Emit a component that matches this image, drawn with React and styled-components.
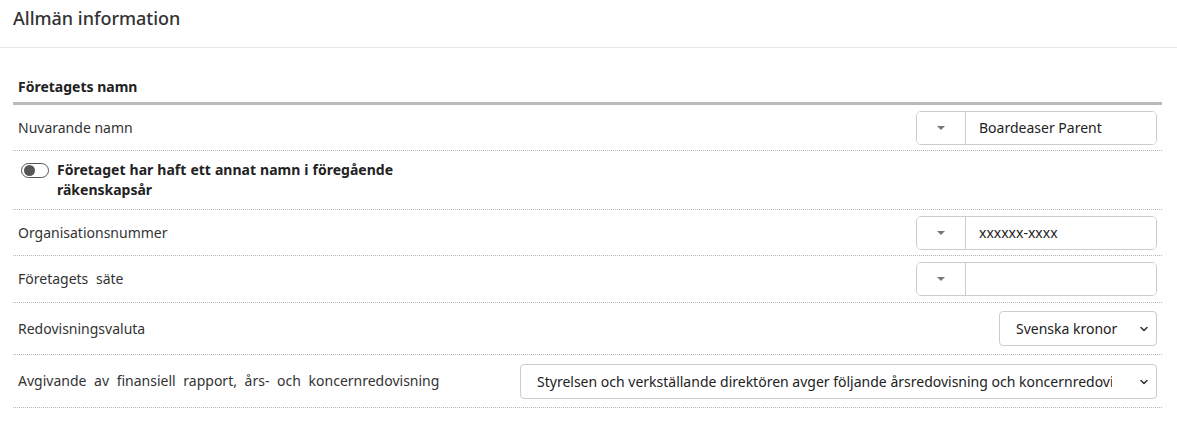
import React from "react";
import styled, { createGlobalStyle } from "styled-components";
import { ChevronDown } from "lucide-react";

const GlobalStyle = createGlobalStyle`
  html, body {
    margin: 0;
    padding: 0;
    background: #fff;
  }
  body {
    font-family: "Noto Sans", "Open Sans", Arial, sans-serif;
    color: #333;
  }
  * {
    box-sizing: border-box;
  }
`;

const Page = styled.div`
  width: 1177px;
`;

const PanelHeader = styled.div`
  height: 48px;
  padding: 6px 13px 0;
  border-bottom: 1px solid #e6e6e6;
  font-size: 18px;
  font-weight: 500;
  color: #333;
`;

const Body = styled.div`
  padding: 29px 15px 0 13px;
`;

const SectionTitle = styled.div`
  font-size: 14px;
  font-weight: 700;
  color: #222;
  padding: 0 5px 5px;
  border-bottom: 3px solid #b9b9b9;
  line-height: 20px;
`;

const Row = styled.div`
  display: flex;
  align-items: center;
  justify-content: space-between;
  min-height: ${(p) => p.$height || 46}px;
  padding: 0 5px;
  border-bottom: 1px dotted #b5b5b5;
`;

const Label = styled.div`
  font-size: 14px;
  color: #333;
  line-height: 20px;
  word-spacing: ${(p) => (p.$wide ? "4px" : "normal")};
`;

const ToggleLabel = styled.label`
  display: flex;
  align-items: flex-start;
  gap: 8px;
  width: 375px;
  padding: 9px 0 9px 3px;
  font-size: 14px;
  font-weight: 700;
  line-height: 20px;
  color: #222;
  text-align: justify;
`;

const Toggle = styled.span`
  flex: none;
  position: relative;
  width: 28px;
  height: 15px;
  margin-top: 3px;
  border: 1px solid #555;
  border-radius: 8px;
  background: #fff;

  &::after {
    content: "";
    position: absolute;
    left: 2px;
    top: 1px;
    width: 11px;
    height: 11px;
    border-radius: 50%;
    background: #555;
  }
`;

const InputGroup = styled.div`
  display: flex;
  width: 241px;
  height: 34px;
  border: 1px solid #ccc;
  border-radius: 5px;
  overflow: hidden;
`;

const CaretButton = styled.button`
  width: 49px;
  border: none;
  border-right: 1px solid #ccc;
  background: #fff;
  display: flex;
  align-items: center;
  justify-content: center;
  padding: 0;

  &::before {
    content: "";
    border-left: 4px solid transparent;
    border-right: 4px solid transparent;
    border-top: 4px solid #777;
  }
`;

const TextInput = styled.input`
  flex: 1;
  min-width: 0;
  border: none;
  outline: none;
  padding: 0 13px;
  font-family: inherit;
  font-size: 14px;
  color: #222;
  background: #fff;
`;

const SelectWrap = styled.div`
  position: relative;
  width: ${(p) => p.$width}px;
  height: 35px;
`;

const Select = styled.select`
  appearance: none;
  width: 100%;
  height: 100%;
  border: 1px solid #ccc;
  border-radius: 4px;
  background: #fff;
  padding: 0 ${(p) => p.$padRight || 40}px 0 16px;
  font-family: inherit;
  font-size: 14px;
  color: #222;
  outline: none;
`;

const Chevron = styled(ChevronDown)`
  position: absolute;
  right: 7px;
  top: 12px;
  pointer-events: none;
  color: #333;
`;

const rows = [
  { label: "Organisationsnummer", value: "xxxxxx-xxxx", height: 46 },
  { label: "Företagets säte", value: "", height: 47 },
];

export default function App() {
  return (
    <Page>
      <GlobalStyle />
      <PanelHeader>Allmän information</PanelHeader>
      <Body>
        <SectionTitle>Företagets namn</SectionTitle>
        <Row>
          <Label>Nuvarande namn</Label>
          <InputGroup>
            <CaretButton />
            <TextInput defaultValue="Boardeaser Parent" />
          </InputGroup>
        </Row>
        <Row $height={59}>
          <ToggleLabel>
            <Toggle />
            <span>Företaget har haft ett annat namn i föregående räkenskapsår</span>
          </ToggleLabel>
        </Row>
        {rows.map((r) => (
          <Row key={r.label} $height={r.height}>
            <Label $wide>{r.label}</Label>
            <InputGroup>
              <CaretButton />
              <TextInput defaultValue={r.value} />
            </InputGroup>
          </Row>
        ))}
        <Row $height={52}>
          <Label>Redovisningsvaluta</Label>
          <SelectWrap $width={158}>
            <Select defaultValue="SEK" $padRight={30}>
              <option value="SEK">Svenska kronor</option>
            </Select>
            <Chevron size={12} strokeWidth={3} />
          </SelectWrap>
        </Row>
        <Row $height={53}>
          <Label $wide>Avgivande av finansiell rapport, års- och koncernredovisning</Label>
          <SelectWrap $width={637}>
            <Select defaultValue="a" $padRight={44}>
              <option value="a">
                Styrelsen och verkställande direktören avger följande årsredovisning och koncernredovisning.
              </option>
            </Select>
            <Chevron size={12} strokeWidth={3} />
          </SelectWrap>
        </Row>
      </Body>
    </Page>
  );
}
